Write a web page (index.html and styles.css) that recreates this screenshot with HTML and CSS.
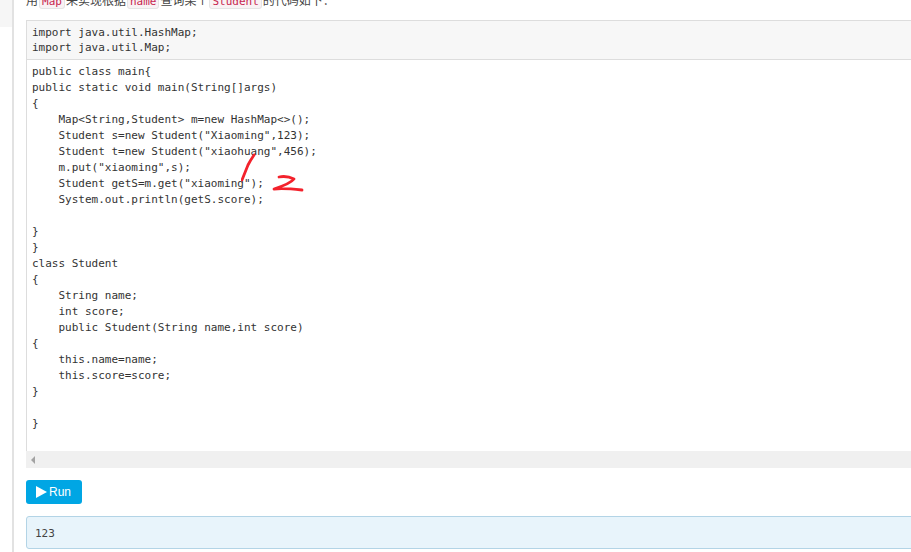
FILE: index.html
```html
<!DOCTYPE html>
<html lang="zh">
<head>
<meta charset="utf-8">
<title>Map</title>
<link rel="stylesheet" href="styles.css">
</head>
<body>
<div class="page">
  <aside class="rail"><div class="rail-top"></div></aside>
  <main class="content">
    <p class="intro">用<code>Map</code>来实现根据<code>name</code>查询某个<code>Student</code>的代码如下：</p>
    <div class="editor">
      <pre class="imports">import java.util.HashMap;
import java.util.Map;</pre>
      <pre class="source">public class main{
public static void main(String[]args)
{
    Map&lt;String,Student&gt; m=new HashMap&lt;&gt;();
    Student s=new Student("Xiaoming",123);
    Student t=new Student("xiaohuang",456);
    m.put("xiaoming",s);
    Student getS=m.get("xiaoming");
    System.out.println(getS.score);

}
}
class Student
{
    String name;
    int score;
    public Student(String name,int score)
{
    this.name=name;
    this.score=score;
}

}
</pre>
      <div class="scrollbar"><span class="arrow"></span></div>
      <svg class="scribble" width="70" height="50" viewBox="0 0 70 50" aria-hidden="true">
        <path class="ink" d="M13 4 C11 7 9 10 7 14 C5 19 3 24 1 29"/>
        <path class="ink" d="M38 26 C43 25 49 26 53 28 C50 32 42 35 33 38 C42 37 52 38 61 39"/>
      </svg>
    </div>
    <button class="run" type="button"><span class="play"></span>Run</button>
    <pre class="output">123</pre>
  </main>
</div>
</body>
</html>
```
FILE: styles.css
```css
* { box-sizing: border-box; }
html, body { margin: 0; padding: 0; background: #fff; }
body { width: 911px; height: 552px; overflow: hidden; }
.page { display: flex; height: 552px; }
.rail { flex: 0 0 14px; border-right: 2px solid #e2e2e2; }
.rail-top { height: 27px; background: #f6f6f6; }
.content { flex: 0 0 960px; padding-left: 12px; }
.intro {
  margin: -10px 0 0;
  height: 30px;
  font: 12px/20px "Noto Sans CJK SC", "Liberation Sans", sans-serif;
  color: #444;
}
.intro code {
  font: 11px "DejaVu Sans Mono", monospace;
  color: #c7254e;
  background: #f9f2f4;
  border: 1px solid #e4e4e4;
  border-radius: 3px;
  padding: 0 2px;
  margin: 0 1px;
}
.editor { position: relative; border: 1px solid #ddd; border-bottom: 0; width: 940px; }
pre {
  margin: 0;
  font: 11px/16px "DejaVu Sans Mono", monospace;
  color: #333;
}
.imports { background: #f7f7f7; padding: 4px 5px 0; height: 39px; border-bottom: 1px solid #ddd; line-height: 15px; }
.source { background: #fff; padding: 4px 5px 0; height: 391px; }
.scrollbar { height: 17px; background: #f0f0f0; display: flex; align-items: center; padding-left: 5px; margin-left: -1px; }
.arrow { border: 4px solid transparent; border-right: 4px solid #a3a3a3; border-left: 0; }
.scribble { position: absolute; left: 214px; top: 130px; }
.ink { fill: none; stroke: #f3222c; stroke-width: 2.8; stroke-linecap: round; stroke-linejoin: round; }
.run {
  display: flex;
  align-items: center;
  gap: 2px;
  margin-top: 12px;
  width: 56px;
  height: 24px;
  padding: 0 0 0 10px;
  border: 0;
  border-radius: 3px;
  background: #00a6e4;
  color: #fff;
  font: 12px "Liberation Sans", sans-serif;
}
.play { border: 6px solid transparent; border-left: 11px solid #fff; border-right: 0; }
.output {
  margin-top: 12px;
  height: 33px;
  width: 940px;
  padding: 9px 8px 0;
  background: #e8f4fb;
  border: 1px solid #b3d4e6;
  border-radius: 3px;
  color: #444;
}
```
